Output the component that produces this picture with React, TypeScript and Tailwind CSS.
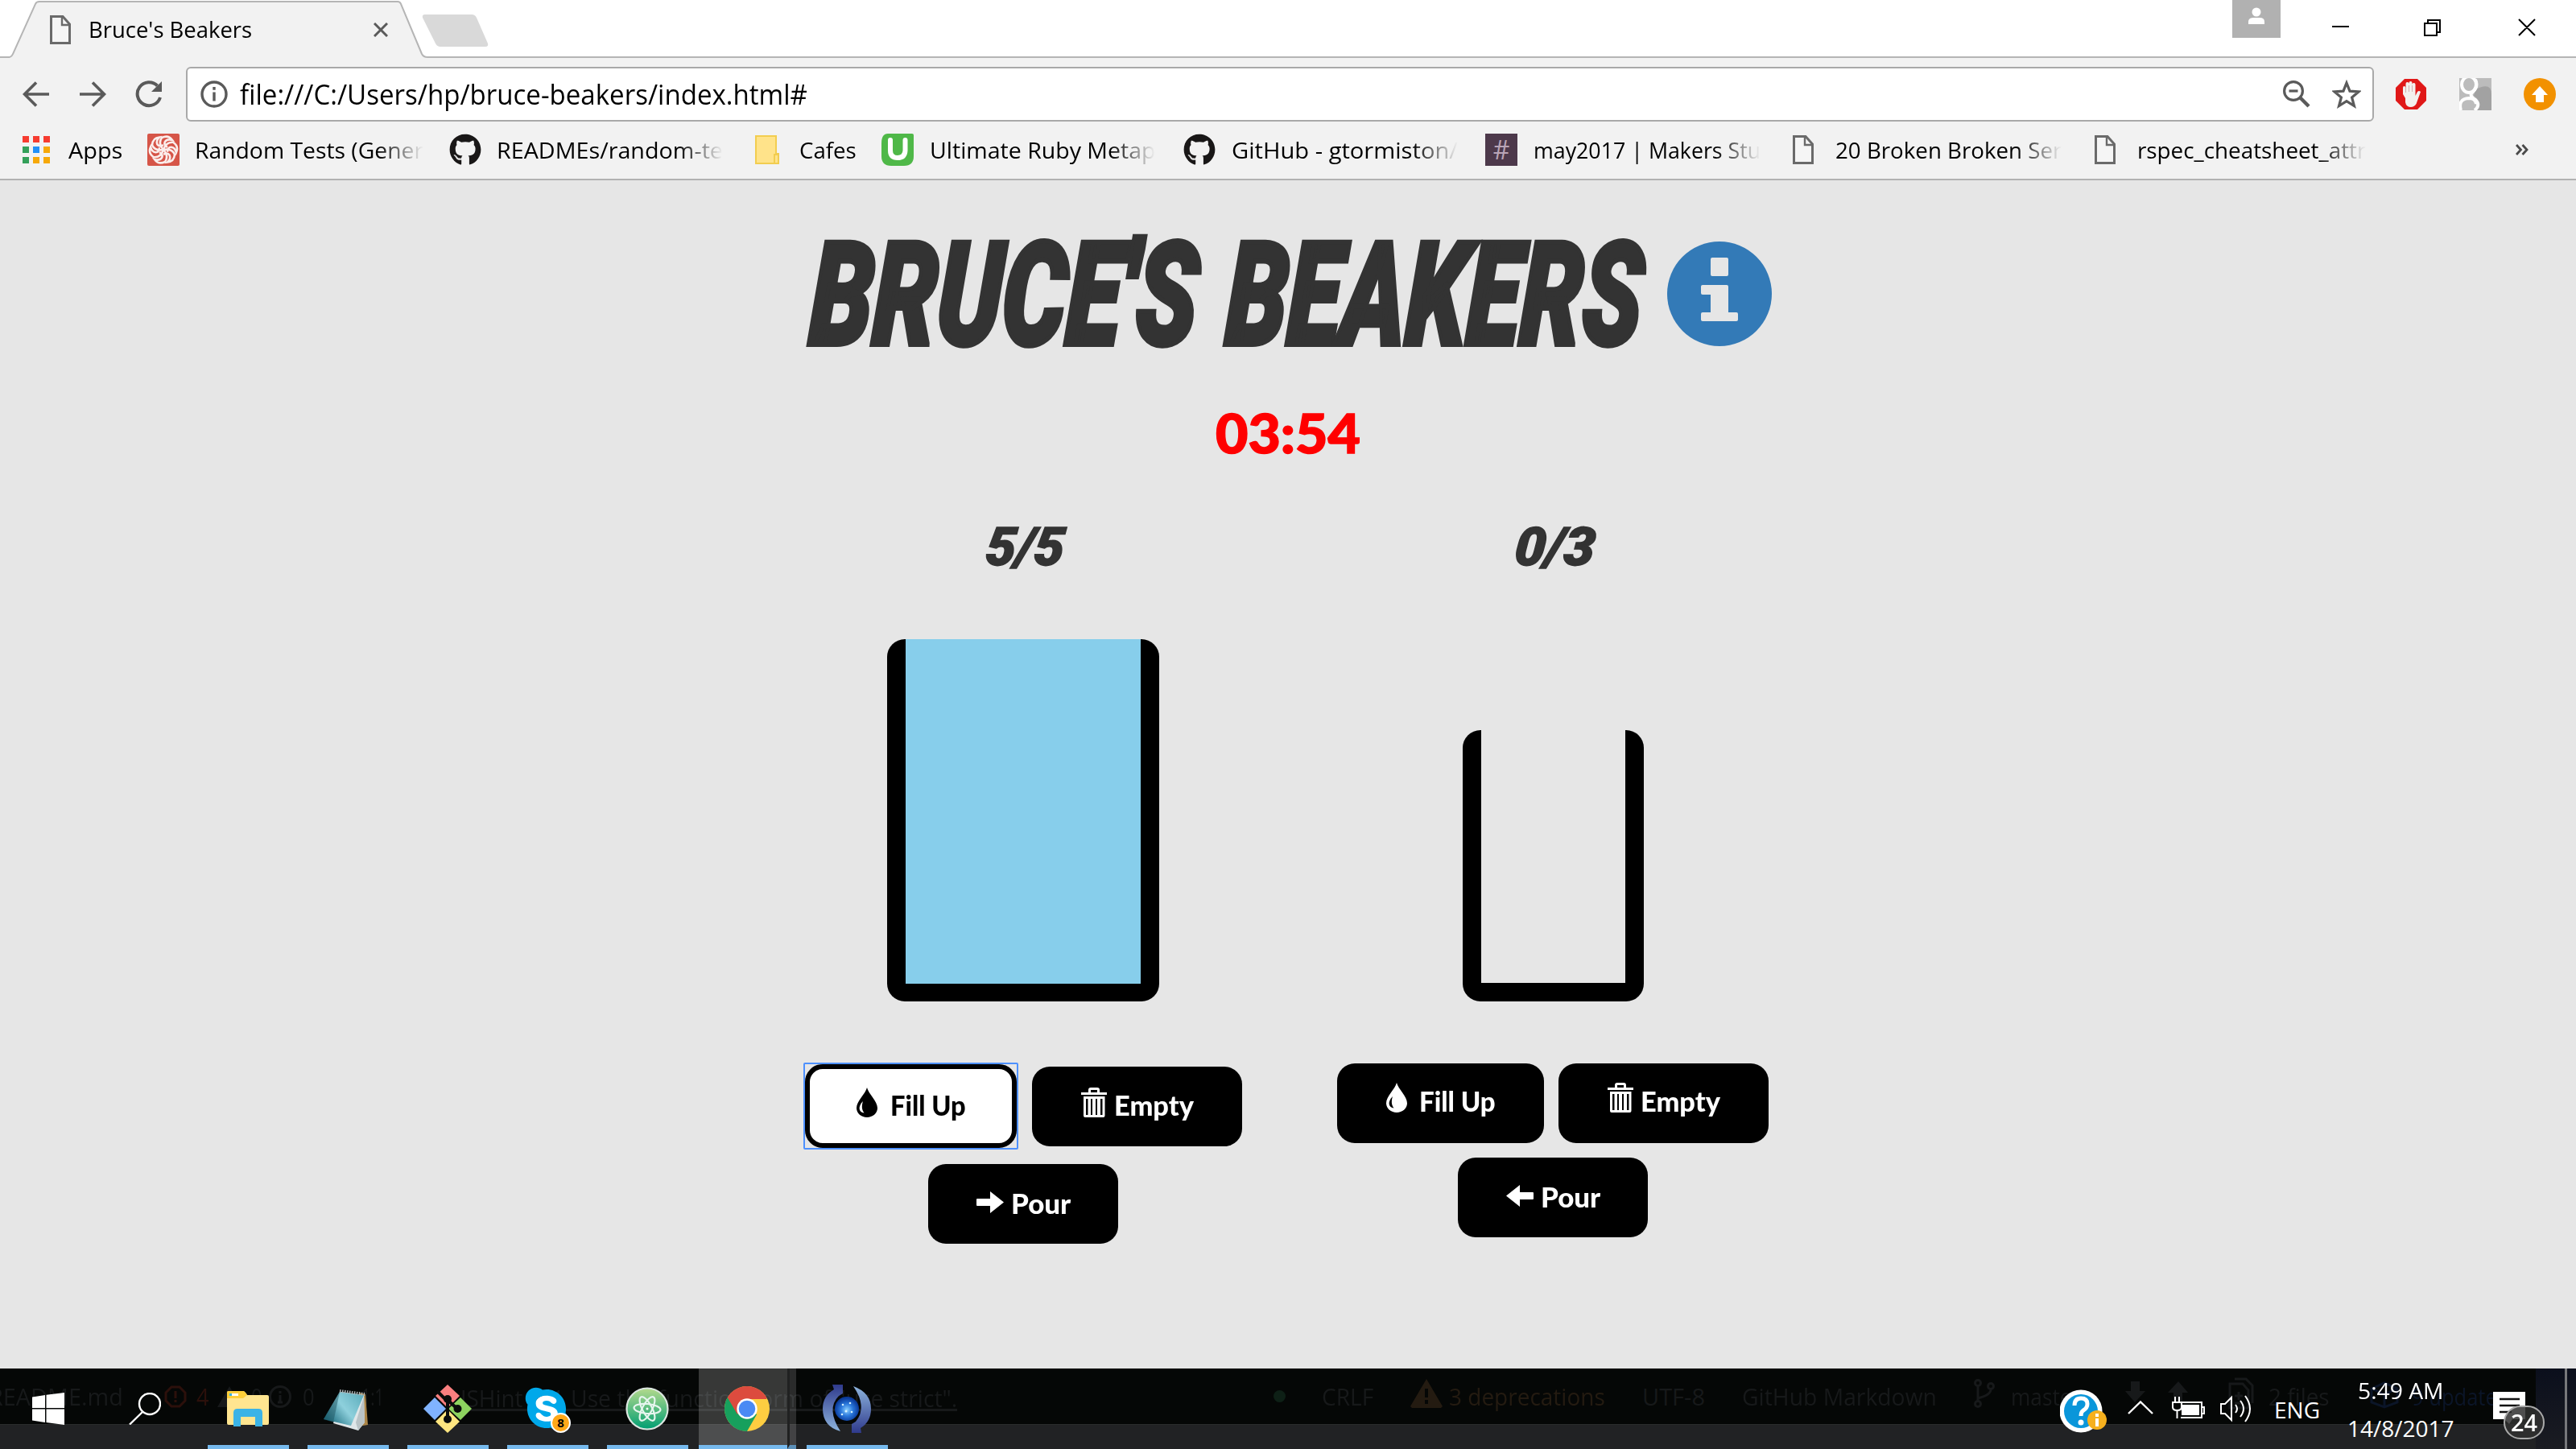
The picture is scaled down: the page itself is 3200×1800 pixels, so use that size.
import { useLayoutEffect, useRef, type ReactNode } from "react";
import { FaGithub, FaSkype } from "react-icons/fa";

/* Text squeezed or stretched horizontally to fill the width of its box. */
function Fit({ children, className = "" }: { children: string; className?: string }) {
  const box = useRef<HTMLSpanElement>(null);
  const inner = useRef<HTMLSpanElement>(null);
  useLayoutEffect(() => {
    if (box.current && inner.current) {
      inner.current.style.transform = `scaleX(${box.current.clientWidth / inner.current.offsetWidth})`;
    }
  });
  return (
    <span ref={box} className={`block shrink-0 whitespace-pre ${className}`}>
      <span ref={inner} className="inline-block origin-left">
        {children}
      </span>
    </span>
  );
}

const FileIcon = ({ className = "" }: { className?: string }) => (
  <svg viewBox="0 0 26 36" className={`h-9 w-[26px] shrink-0 ${className}`} fill="none" stroke="#6a6a6a" strokeWidth="3">
    <path d="M1.5 1.5H16L24.5 11V34.5H1.5Z" fill="#f5f5f5" />
    <path d="M15 2V12H24" strokeWidth="2.4" />
  </svg>
);

function TabStrip() {
  return (
    <div className="relative flex h-[72px] items-start border-b-2 border-[#b5b5b5] bg-white">
      <div className="relative h-[72px] w-[520px] ml-3 shrink-0">
        <svg viewBox="0 0 520 72" className="absolute inset-0 h-[72px] w-[520px]">
          <path d="M0 71Q3 70 4 67L32 5Q33 2 37 2H482Q485 2 486 5L512 67Q514 71 519 71V72H0Z" fill="#f2f2f2" />
          <path d="M0 71Q3 70 4 67L32 5Q33 2 37 2H482Q485 2 486 5L512 67Q514 71 519 71" fill="none" stroke="#b5b5b5" strokeWidth="2" />
        </svg>
        <div className="relative flex h-[74px] items-center pl-[50px]">
          <FileIcon />
          <Fit className="-mt-0.5 ml-[22px] w-[203px] text-[28px] leading-9">Bruce's Beakers</Fit>
          <svg viewBox="0 0 18 18" className="ml-[151px] size-[18px]" stroke="#5a5a5a" strokeWidth="3">
            <path d="M1 1L17 17M17 1L1 17" />
          </svg>
        </div>
      </div>
      <svg viewBox="0 0 84 42" className="-ml-2 mt-[17px] h-[42px] w-[84px] shrink-0">
        <path d="M4 1H62Q66 1 68 5L82 37Q83 41 79 41H23Q19 41 17 37L1 5Q0 1 4 1Z" fill="#d9d9d9" />
      </svg>
      <div className="ml-auto flex h-[47px] w-[60px] items-center justify-center bg-[#b1b1b1]">
        <svg viewBox="0 0 20 22" className="-mt-2 h-[22px] w-5" fill="#fff">
          <circle cx="10" cy="6" r="5.5" />
          <path d="M0 21V18Q0 13 6 13H14Q20 13 20 18V21Z" />
        </svg>
      </div>
      <div className="ml-16 mt-6 flex w-[303px]">
        <svg viewBox="0 0 252 20" className="h-5 w-[252px] overflow-visible" fill="none" stroke="#000" strokeWidth="2">
          <path d="M0 9H21M115 5H130V20H115ZM119 5V1H134V16H130M232 0L252 20M252 0L232 20" />
        </svg>
      </div>
    </div>
  );
}

function Toolbar() {
  return (
    <div className="flex h-[90px] items-center pb-0 pl-7 pr-[25px]">
      <svg viewBox="0 0 34 32" className="h-8 w-[34px]" fill="none" stroke="#5a5a5a" strokeWidth="3.6">
        <path d="M33 16H3M17 1.5L2.5 16L17 30.5" />
      </svg>
      <svg viewBox="0 0 34 32" className="ml-[36px] h-8 w-[34px]" fill="none" stroke="#5a5a5a" strokeWidth="3.6">
        <path d="M1 16H31M17 1.5L31.5 16L17 30.5" />
      </svg>
      <svg viewBox="0 0 34 34" className="ml-9 h-[34px] w-[34px]" fill="none" stroke="#5a5a5a" strokeWidth="4">
        <path d="M31 21A14.5 14.5 0 1 1 27.5 6.5" />
        <path d="M33 1V14H20Z" fill="#5a5a5a" stroke="none" />
      </svg>
      <div className="ml-[29px] flex h-[68px] w-[2718px] items-center rounded-[6px] border-2 border-[#a9a9a9] bg-white pl-4 pr-[14px]">
        <svg viewBox="0 0 34 34" className="size-[34px]" fill="none" stroke="#5a5a5a" strokeWidth="3.4">
          <circle cx="17" cy="17" r="15" />
          <path d="M17 14.5V25.5M17 8V11.8" />
        </svg>
        <Fit className="ml-[15px] w-[705px] text-[34px] leading-[56px]">file:///C:/Users/hp/bruce-beakers/index.html#</Fit>
        <svg viewBox="0 0 34 34" className="ml-auto size-[34px]" fill="none" stroke="#5a5a5a" strokeWidth="3.2">
          <circle cx="13" cy="13" r="11.4" />
          <path d="M7.5 13H18.5" />
          <path d="M21 21L32 32" strokeWidth="4.4" />
        </svg>
        <svg viewBox="0 0 36 36" className="ml-[27px] size-9" fill="none" stroke="#5a5a5a" strokeWidth="3.2">
          <path d="M18 4L22 14.2L33 15L24.6 22L27.4 32.5L18 26.7L8.6 32.5L11.4 22L3 15L14 14.2Z" />
        </svg>
      </div>
      <svg viewBox="0 0 38 38" className="ml-[27px] size-[38px]">
        <path d="M11 0H27L38 11V27L27 38H11L0 27V11Z" fill="#e01818" />
        <path d="M12 24L9 19V11Q9 9 10.500 9T12.500 11V17V6Q12.500 4 14.500 4T16.500 6V16V5Q16.500 3 18.500 3T20.500 5V16V7Q20.500 5 22.500 5T24.500 7V21L27 16Q29 14 31 16L27 27Q25 35 19 35T12 29Z" fill="#f3f0ee" />
        <path d="M12.500 10V17M16.500 8V16M20.500 8V16" stroke="#c9a0a0" strokeWidth="0.8" />
      </svg>
      <svg viewBox="0 0 40 40" className="ml-[41px] size-10">
        <path d="M0 0H40V40H0Z" fill="#bcbcbc" />
        <path d="M20 14Q40 4 40 20V40H22Q30 30 18 22Z" fill="#a2a2a2" />
        <g fill="none" stroke="#fff" strokeWidth="4">
          <ellipse cx="12" cy="8" rx="9" ry="10" />
          <path d="M20 2Q24 10 17 17Q11 21 20 27Q27 34 19 40M2 40Q-2 26 12 25Q20 25 21 32" />
        </g>
      </svg>
      <svg viewBox="0 0 40 40" className="ml-10 size-10">
        <circle cx="20" cy="20" r="20" fill="#f29100" />
        <path d="M20 10L30 21H25V30H15V21H10Z" fill="#fff" />
      </svg>
    </div>
  );
}

const AppsIcon = () => (
  <svg viewBox="0 0 34 34" className="size-[34px]">
    <path d="M0 0h8v8H0zM13 0h8v8h-8zM26 0h8v8h-8z" fill="#f63c30" />
    <path d="M0 13h8v8H0zM0 26h8v8H0z" fill="#34a05a" />
    <path d="M13 13h8v8h-8z" fill="#2290f8" />
    <path d="M26 13h8v8h-8zM13 26h8v8h-8zM26 26h8v8h-8z" fill="#f6a808" />
  </svg>
);

const SwirlIcon = () => (
  <svg viewBox="0 0 40 40" className="size-10" fill="none" stroke="#fbeeec" strokeWidth="2.6">
    <rect width="40" height="40" rx="2" fill="#d65548" stroke="none" />
    {[0, 60, 120, 180, 240, 300].map((a) => (
      <path key={a} transform={`rotate(${a} 20 20)`} d="M20 20Q13 12 18 5Q26 1 31 8Q25 6 22 10Q20 14 25 17" />
    ))}
  </svg>
);

const fade = "overflow-hidden [mask-image:linear-gradient(to_right,black_80%,transparent_100%)]";

function Bookmarks() {
  return (
    <div className="flex h-[62px] items-center border-b-2 border-[#b2b2b2] pb-3 pl-7 text-[28px] leading-10">
      <AppsIcon />
      <Fit className="ml-[23px] w-[67px]">Apps</Fit>
      <div className="ml-[31px] flex w-[375px] items-center">
        <SwirlIcon />
        <Fit className={`ml-[19px] w-[284px] ${fade}`}>Random Tests (Gener</Fit>
      </div>
      <div className="flex w-[380px] items-center">
        <FaGithub className="size-10 text-[#191717]" />
        <Fit className={`ml-[19px] w-[281px] ${fade}`}>READMEs/random-te</Fit>
      </div>
      <svg viewBox="0 0 30 36" className="h-9 w-[30px]">
        <path d="M1 1H26V23H29V35H1Z" fill="#ffe38a" stroke="#f2cd50" strokeWidth="2" />
        <path d="M24 34V24H28" fill="none" stroke="#f2cd50" strokeWidth="2" />
      </svg>
      <Fit className="ml-[25px] w-[71px]">Cafes</Fit>
      <div className="ml-[31px] flex w-[375px] items-center">
        <svg viewBox="0 0 40 40" className="size-10">
          <path d="M8 0H38Q40 0 40 2V28Q40 40 28 40H12Q0 40 0 28V12Q0 0 8 0Z" fill="#4fb848" />
          <path d="M11 8V21Q11 30 20 30T29.500 21V8" fill="none" stroke="#fff" strokeWidth="6" strokeLinecap="round" />
        </svg>
        <Fit className={`ml-5 w-[280px] ${fade}`}>Ultimate Ruby Metap</Fit>
      </div>
      <div className="flex w-[375px] items-center">
        <FaGithub className="size-10 text-[#191717]" />
        <Fit className={`ml-5 w-[281px] ${fade}`}>GitHub - gtormiston/</Fit>
      </div>
      <div className="flex w-[382px] items-center">
        <div className="flex size-10 items-center justify-center bg-[#4d394b] text-[32px] text-[#b9a5b7]">#</div>
        <Fit className={`ml-[20px] w-[282px] ${fade}`}>may2017 | Makers Stu</Fit>
      </div>
      <div className="flex w-[375px] items-center">
        <FileIcon />
        <Fit className={`ml-[27px] w-[281px] ${fade}`}>20 Broken Broken Ser</Fit>
      </div>
      <FileIcon />
      <Fit className={`ml-[27px] w-[284px] ${fade}`}>rspec_cheatsheet_attr</Fit>
      <svg viewBox="0 0 16 14" className="ml-[186px] h-3.5 w-4" fill="none" stroke="#4a4a4a" strokeWidth="2.8">
        <path d="M1 1L6.500 7L1 13M8.500 1L14 7L8.500 13" />
      </svg>
    </div>
  );
}

const Drop = ({ hole }: { hole: string }) => (
  <svg viewBox="0 0 26 37" className="mb-2.5 h-[37px] w-[26px] shrink-0">
    <path d="M13 0C15 8 26 17 26 25.500C26 32 20 37 13 37S0 32 0 25.500C0 17 11 8 13 0Z" fill="currentColor" />
    <path d="M8 17C1 24 3 31 9.500 31.500C6 27 6.500 22 8 17Z" fill={hole} />
  </svg>
);

const Trash = () => (
  <svg viewBox="0 0 32 37" className="mb-2.5 h-[37px] w-8 shrink-0" fill="currentColor" fillRule="evenodd">
    <path d="M0 6H9V3Q9 0 12 0H20Q23 0 23 3V6H32V9H0ZM12 6H20V3H12Z" />
    <path d="M3 11H29.500V35Q29.500 37 27.500 37H5Q3 37 3 35ZM6 14V34H8.500V14ZM12 14V34H14V14ZM18 14V34H20V14ZM24 14V34H26.500V14Z" />
  </svg>
);

const Arrow = ({ flip }: { flip?: boolean }) => (
  <svg viewBox="0 0 34 27" className={`mb-1 h-[27px] w-[34px] shrink-0 ${flip ? "-scale-x-100" : ""}`} fill="currentColor">
    <path d="M1 9H17V0L34 13.500L17 27V18H1Q0 18 0 17V10Q0 9 1 9Z" />
  </svg>
);

function GameButton({ icon, label, gap, text, className }: { icon: ReactNode; label: string; gap: string; text: string; className: string }) {
  return (
    <button className={`flex shrink-0 items-center justify-center rounded-[22px] font-['Lato'] text-[34px] leading-[50px] font-black ${gap} ${className}`}>
      {icon}
      <Fit className={`mb-0.5 ${text}`}>{label}</Fit>
    </button>
  );
}

function Game() {
  const comic = "font-['Roboto'] font-black italic";
  return (
    <main className="flex h-[1476px] flex-col items-center bg-[#e6e6e6] text-[#333]">
      <h1 className={`mt-[66px] flex h-[150px] items-center text-[179px] leading-[150px] ${comic}`}>
        <Fit className="ml-2 mt-1 w-[481px] -skew-x-3 [-webkit-text-stroke:6px_#333]">BRUCE'S</Fit>
        <Fit className="ml-9 mt-1 w-[517px] -skew-x-3 [-webkit-text-stroke:6px_#333]">BEAKERS</Fit>
        <svg viewBox="0 0 130 130" className="ml-[30px] size-[130px]">
          <circle cx="65" cy="65" r="65" fill="#337ab7" />
          <path d="M56 20H74Q76 20 76 22V41Q76 43 74 43H56Q54 43 54 41V22Q54 20 56 20ZM44 54H74Q76 54 76 56V88H86Q88 88 88 90V97Q88 99 86 99H44Q42 99 42 97V90Q42 88 44 88H54V66H44Q42 66 42 64V56Q42 54 44 54Z" fill="#e6e6e6" />
        </svg>
      </h1>
      <Fit className="mt-[67px] h-[60px] w-[180px] font-['Lato'] text-[67px] leading-[60px] font-black text-[#f00] [-webkit-text-stroke:1.5px_#f00]">03:54</Fit>
      <div className="flex w-[1316px]">
        <section className="flex w-[658px] flex-col items-center">
          <Fit className={`mt-[83px] ml-1.5 h-[60px] w-[98px] -skew-x-6 text-[66px] leading-[60px] [-webkit-text-stroke:1.5px_#333] ${comic}`}>5/5</Fit>
          <div className="mt-[84px] flex h-[450px] items-end">
            <div className="flex h-[450px] w-[338px] overflow-hidden rounded-[22px] bg-black px-[23px] pb-[22px]">
              <div className="w-full bg-[#87ceeb]" />
            </div>
          </div>
          <div className="mt-[76px] flex items-center gap-[17px]">
            <div className="-ml-0.5 rounded-[2px] border-2 border-[#4d90fe]">
              <GameButton icon={<Drop hole="#fff" />} label="Fill Up" gap="gap-4" text="w-[94px]" className="h-[104px] w-[263px] border-[6px] border-black bg-white pl-0.5 text-black" />
            </div>
            <GameButton icon={<Trash />} label="Empty" gap="gap-2" text="w-[99px]" className="h-[99px] w-[261px] bg-black pl-px text-white" />
          </div>
          <GameButton icon={<Arrow />} label="Pour" gap="gap-[9px]" text="w-[74px]" className="mt-[18px] h-[99px] w-[236px] bg-black text-white" />
        </section>
        <section className="flex w-[658px] flex-col items-center">
          <Fit className={`mt-[83px] ml-1.5 h-[60px] w-[100px] -skew-x-6 text-[66px] leading-[60px] [-webkit-text-stroke:1.5px_#333] ${comic}`}>0/3</Fit>
          <div className="mt-[84px] flex h-[450px] items-end">
            <div className="flex h-[337px] w-[225px] overflow-hidden rounded-[22px] bg-black px-[23px] pb-[23px]">
              <div className="w-full bg-[#e6e6e6]" />
            </div>
          </div>
          <div className="mt-[77px] flex items-center gap-[18px]">
            <GameButton icon={<Drop hole="#000" />} label="Fill Up" gap="gap-[15px]" text="w-[95px]" className="h-[99px] w-[257px] bg-black pb-1 text-white" />
            <GameButton icon={<Trash />} label="Empty" gap="gap-2" text="w-[99px]" className="h-[99px] w-[261px] bg-black pb-1 text-white" />
          </div>
          <GameButton icon={<Arrow flip />} label="Pour" gap="gap-[9px]" text="w-[74px]" className="mt-[18px] h-[99px] w-[236px] bg-black text-white" />
        </section>
      </div>
    </main>
  );
}

/* Editor status bar that shows through the translucent taskbar. */
function StatusBehind() {
  return (
    <div className="absolute inset-0 flex flex-col overflow-hidden bg-[#212224]">
      <div className="flex h-[70px] shrink-0 items-center border-b border-[#2b2c2c] bg-[#050706] text-[29px] leading-[40px] text-[#17191a]">
        <Fit className="-ml-3.5 w-[167px]">README.md</Fit>
        <svg viewBox="0 0 28 28" className="ml-[51px] size-7" fill="none" stroke="#2c100b" strokeWidth="3">
          <path d="M9 2H19L26 9V19L19 26H9L2 19V9ZM14 7V16M14 18V21" />
        </svg>
        <Fit className="ml-3 w-4 text-[#2c100b]">4</Fit>
        <svg viewBox="0 0 30 26" className="ml-2.5 h-[26px] w-[30px]" fill="currentColor"><path d="M15 0L30 26H0Z" /></svg>
        <Fit className="ml-3 w-3.5">0</Fit>
        <svg viewBox="0 0 28 28" className="ml-2 size-7" fill="none" stroke="currentColor" strokeWidth="3">
          <circle cx="14" cy="14" r="12.500" /><path d="M14 12V21M11 21H17M14 7V10" />
        </svg>
        <Fit className="ml-3.5 w-[15px]">0</Fit>
        <Fit className="ml-[58px] w-7">1:1</Fit>
        <div className="ml-[95px] flex h-9 w-[617px] border-b-[3px] border-[#17191a]">
          <Fit className="w-[78px]">JSHint</Fit>
          <Fit className="ml-9 w-[15px]">1</Fit>
          <Fit className="ml-2 w-[480px]">Use the function form of "use strict".</Fit>
        </div>
        <div className="ml-[393px] size-[15px] rounded-full bg-[#0e2016]" />
        <Fit className="ml-[45px] w-16">CRLF</Fit>
        <svg viewBox="0 0 40 36" className="mb-2 ml-[46px] h-9 w-10" fill="#241b11" fillRule="evenodd">
          <path d="M20 0L40 34L38 36H2L0 34ZM18 12V23H22V12ZM18 26V31H22V26Z" />
        </svg>
        <Fit className="ml-2 w-[194px] text-[#241b11]">3 deprecations</Fit>
        <Fit className="ml-[46px] w-[78px]">UTF-8</Fit>
        <Fit className="ml-[46px] w-[242px]">GitHub Markdown</Fit>
        <svg viewBox="0 0 26 36" className="mb-2 ml-[46px] h-9 w-[26px]" fill="none" stroke="currentColor" strokeWidth="3">
          <circle cx="5" cy="5" r="3.500" /><circle cx="5" cy="31" r="3.500" /><circle cx="21" cy="9" r="3.500" />
          <path d="M5 9V27M21 13Q21 20 5 24" />
        </svg>
        <Fit className="ml-5 w-[86px]">master</Fit>
        <svg viewBox="0 0 78 26" className="mb-3 ml-14 h-[26px] w-[78px]" fill="currentColor">
          <path d="M7 0H18V12H25L12 26L0 12H7ZM66 0L78 14H71V26H60V14H53Z" />
        </svg>
        <svg viewBox="0 0 32 40" className="mb-2 ml-[50px] h-10 w-8" fill="none" stroke="currentColor" strokeWidth="3">
          <path d="M2 8H18L25 16V38H2ZM8 2H22L30 10V32M13 18V28M8 23H18M8 32H18" />
        </svg>
        <Fit className="ml-[18px] w-[76px]">2 files</Fit>
        <svg viewBox="0 0 36 34" className="mb-1 ml-[50px] h-[34px] w-9" fill="none" stroke="#0b1528" strokeWidth="3">
          <path d="M2 9L18 2L34 9V26L18 32L2 26ZM2 9L18 16L34 9M18 16V32" />
        </svg>
        <Fit className="ml-4 w-[118px] text-[#0b1528]">9 updates</Fit>
      </div>
    </div>
  );
}

const Slot = ({ children, line = true, className = "" }: { children: ReactNode; line?: boolean; className?: string }) => (
  <div className={`relative flex h-[100px] shrink-0 items-center justify-center ${line ? "border-b-[5px] border-[#76b9ed] pt-[5px]" : ""} ${className}`}>
    {children}
  </div>
);

function Taskbar() {
  return (
    <footer className="relative h-[100px] overflow-hidden bg-[#050706] text-white">
      <StatusBehind />
      <div className="absolute right-0 h-[100px] w-[50px] bg-gradient-to-b from-[#0b0f1c] to-[#1b1c22]" />
      <div className="relative flex h-[100px]">
        <Slot line={false} className="w-[120px]">
          <svg viewBox="0 0 40 40" className="size-10" fill="#fff">
            <path d="M0 5.500L16 3V19H0ZM17.500 2.800L40 0V19H17.500ZM0 20.500H16V37L0 34.500ZM17.500 20.500H40V40L17.500 37Z" />
          </svg>
        </Slot>
        <Slot line={false} className="w-[120px]">
          <svg viewBox="0 0 40 40" className="size-10" fill="none" stroke="#fff" strokeWidth="2.4">
            <circle cx="26" cy="14" r="13" /><path d="M17 24L1 39.500" />
          </svg>
        </Slot>
        <Slot className="ml-[18px] w-[101px]">
          <svg viewBox="0 0 52 44" className="-ml-0.5 h-11 w-[52px]">
            <path d="M0 2Q0 0 2 0H20Q22 0 25 5H50Q52 5 52 7V40Q52 42 50 42H2Q0 42 0 40Z" fill="#ffe590" />
            <path d="M0 2Q0 0 2 0H20Q22 0 25 5L20 9H0Z" fill="#ffcf3a" />
            <path d="M3 3H14V6H3Z" fill="#fff" /><path d="M3 3H6V6H3Z" fill="#3bb3e6" />
            <path d="M8 44V27Q8 22 13 22H39Q44 22 44 27V44H35V32H17V44Z" fill="#3bb3e6" />
          </svg>
        </Slot>
        <Slot className="ml-[23px] w-[101px]">
          <svg viewBox="0 0 55 64" className="-ml-1.5 h-[64px] w-[55px]">
            <defs>
              <linearGradient id="note" x1="0" y1="0.7" x2="1" y2="0">
                <stop offset="0" stopColor="#1d6d80" /><stop offset="0.450" stopColor="#8ed0dc" /><stop offset="1" stopColor="#58a9b9" />
              </linearGradient>
            </defs>
            <g transform="translate(0 7)">
              <path d="M44 5L52 7L55 45L49 46L40 42Z" fill="#ab8547" />
              <path d="M22 4L50 8L51 42L43 52L12 43Z" fill="#dfe6e8" />
              <path d="M50 10L40 42L43 52L51 42Z" fill="#b9c3c6" />
              <path d="M20 4L50 8L34 46L0 38Z" fill="url(#note)" />
              <path d="M20 4L12 42L0 38Z" fill="#205562" opacity="0.500" />
              <path d="M20 3L51 7" stroke="#aeb4b6" strokeWidth="4" strokeDasharray="1.500 1.500" />
            </g>
          </svg>
        </Slot>
        <Slot className="ml-[23px] w-[101px]">
          <svg viewBox="0 0 60 60" className="-ml-px size-[60px]">
            <path d="M30 0L45 14L30 29L15 14Z" fill="#fa7f7f" />
            <path d="M46 16L60 30L46 44L31 30Z" fill="#8dd35f" />
            <path d="M30 31L45 46L30 60L15 46Z" fill="#ffe680" />
            <path d="M14 16L28 30L14 44L0 30Z" fill="#80b3ff" />
            <g stroke="#0a0c0b" strokeWidth="4"><path d="M17 8L30 21V43M30 19L42 30" fill="none" /></g>
            <g fill="#0a0c0b"><circle cx="30" cy="18" r="5" /><circle cx="42.500" cy="30" r="5" /><circle cx="30" cy="43" r="5" /></g>
          </svg>
        </Slot>
        <Slot className="ml-[23px] w-[101px]">
          <div className="relative -ml-0.5 size-[55px]">
            <div className="absolute inset-2.5 rounded-full bg-white" />
            <FaSkype className="relative size-[60px] -ml-[3px] -mt-[3px] text-[#00a8ea]" />
            <div className="absolute -right-0.5 -bottom-0.5 flex size-[25px] items-center justify-center rounded-full border-2 border-white bg-[#ffa818] text-[15px] leading-none font-bold text-black">8</div>
          </div>
        </Slot>
        <Slot className="ml-[23px] w-[101px]">
          <svg viewBox="0 0 54 54" className="-ml-0.5 size-[54px]" fill="none" stroke="#e6f5ee" strokeWidth="2.2">
            <defs>
              <linearGradient id="atom" x2="0" y2="1"><stop stopColor="#b4da8d" /><stop offset="1" stopColor="#009e72" /></linearGradient>
            </defs>
            <circle cx="27" cy="27" r="25.500" fill="url(#atom)" stroke="#dce6e0" />
            <ellipse cx="27" cy="27" rx="16.500" ry="6" transform="rotate(5 27 27)" />
            <ellipse cx="27" cy="27" rx="16.500" ry="6" transform="rotate(62 27 27)" />
            <ellipse cx="27" cy="27" rx="16.500" ry="6" transform="rotate(118 27 27)" />
            <circle cx="27" cy="27" r="1.500" fill="#fff" stroke="none" />
          </svg>
        </Slot>
        <Slot className="ml-[13px] w-[110px] bg-white/20">
          <svg viewBox="0 0 56 56" className="ml-2.5 size-14">
            <circle cx="28" cy="28" r="28" fill="#fdcd41" />
            <path d="M28 28L3.750 14A28 28 0 0 0 28 56L40.100 35Z" fill="#17a05d" />
            <path d="M3.750 14A28 28 0 0 1 52.250 14L52 16H28L16 35Z" fill="#dc4b3e" />
            <circle cx="28" cy="28" r="12.700" fill="#fff" /><circle cx="28" cy="28" r="10.300" fill="#4a8af4" />
          </svg>
        </Slot>
        <Slot className="w-[11px] border-[#5b8fb8]! border-l-[3px] border-l-[#202121]! bg-white/15"><span /></Slot>
        <Slot className="ml-[13px] w-[101px]">
          <svg viewBox="0 0 60 60" className="-ml-px size-[60px]">
            <defs>
              <radialGradient id="orb" cx="0.500" cy="0.550"><stop stopColor="#8cd0ff" /><stop offset="0.500" stopColor="#2a78dc" /><stop offset="1" stopColor="#0a3a9a" /></radialGradient>
              <linearGradient id="arcA" x2="0" y2="1"><stop stopColor="#2f3a8c" /><stop offset="1" stopColor="#8db4dd" /></linearGradient>
              <linearGradient id="arcB" x2="0" y2="1"><stop stopColor="#8db4dd" /><stop offset="1" stopColor="#2f3a8c" /></linearGradient>
            </defs>
            <path d="M12 0H25V11L20 14Q4 30 22 58Q0 52 0 30Q0 14 14 6Z" fill="url(#arcA)" />
            <path d="M48 60H36V49L41 46Q56 28 38 2Q60 10 60 30Q60 46 47 54Z" fill="url(#arcB)" />
            <circle cx="30" cy="30" r="15" fill="url(#orb)" />
            <g fill="#d6f2ff"><circle cx="25" cy="25" r="1.300" /><circle cx="34" cy="23" r="1.300" /><circle cx="29" cy="33" r="1.500" /><circle cx="36" cy="34" r="1.300" /><circle cx="24" cy="37" r="1.300" /></g>
          </svg>
        </Slot>
        <div className="ml-auto flex h-[100px] w-[641px] shrink-0 items-center">
          <svg viewBox="0 0 58 54" className="mt-1.5 h-[54px] w-[58px] shrink-0">
            <ellipse cx="26" cy="27" rx="26.500" ry="26.500" fill="#fff" /><circle cx="26" cy="27" r="21" fill="#0a96da" />
            <path d="M18 20Q18 11 26 11T34 18Q34 23 29 26Q26 28 26 33" fill="none" stroke="#fff" strokeWidth="5" /><circle cx="26" cy="41" r="3.500" fill="#fff" />
            <circle cx="46" cy="38" r="12" fill="#f6b01e" /><path d="M46 36V46M46 30V34" stroke="#fff" strokeWidth="4" />
          </svg>
          <svg viewBox="0 0 32 17" className="ml-[26px] mb-1 h-[17px] w-8 shrink-0" fill="none" stroke="#fff" strokeWidth="2.400"><path d="M1 16L16 1.500L31 16" /></svg>
          <svg viewBox="0 0 42 28" className="ml-[23px] h-7 w-[42px] shrink-0 -mt-0.5" fill="none" stroke="#fff" strokeWidth="2">
            <path d="M13 7H37V26H11M38 13H40V21H38" /><path d="M12 10H34V23H12Z" fill="#fff" stroke="none" />
            <path d="M1 7H12V13Q12 17 6.500 17T1 13Z" fill="#050706" /><path d="M4 0V7M9 0V7M6.500 17V27" />
          </svg>
          <svg viewBox="0 0 42 38" className="ml-[18px] h-[38px] w-[42px] shrink-0" fill="none" stroke="#fff" strokeWidth="2">
            <path d="M1 13H6L14 5V33L6 25H1ZM19 14Q23 19 19 24M25 9Q33 19 25 29M31 3Q43 19 31 35" />
          </svg>
          <Fit className="ml-[25px] mt-0.5 w-[57px] text-[28px] leading-9">ENG</Fit>
          <div className="ml-[34px] mt-px flex w-[133px] flex-col items-center text-[28px] leading-[47px]">
            <Fit className="w-[107px]">5:49 AM</Fit>
            <Fit className="w-[133px]">14/8/2017</Fit>
          </div>
          <div className="relative ml-12 mt-[18px] h-[60px] w-[65px] shrink-0">
            <svg viewBox="0 0 40 40" className="size-10" >
              <path d="M0 0H40V34H24L20 40L14 34H0Z" fill="#fff" /><path d="M8 9H33M8 17H33M8 25H23" stroke="#111" strokeWidth="2.400" />
            </svg>
            <div className="absolute top-[17px] left-[13px] flex h-[42px] w-[51px] items-center justify-center rounded-[21px] border-2 border-[#aaa] bg-[#303030]/85">
              <Fit className="w-[33px] text-[28px] leading-9 font-semibold">24</Fit>
            </div>
          </div>
          <div className="ml-6 h-[100px] w-[3px] bg-[#77787b]" />
        </div>
      </div>
    </footer>
  );
}

export default function App() {
  return (
    <div className="h-[1800px] w-[3200px] overflow-hidden bg-[#f2f2f2] font-['Open_Sans','Noto_Sans',sans-serif] text-black">
      <TabStrip />
      <Toolbar />
      <Bookmarks />
      <Game />
      <Taskbar />
    </div>
  );
}
